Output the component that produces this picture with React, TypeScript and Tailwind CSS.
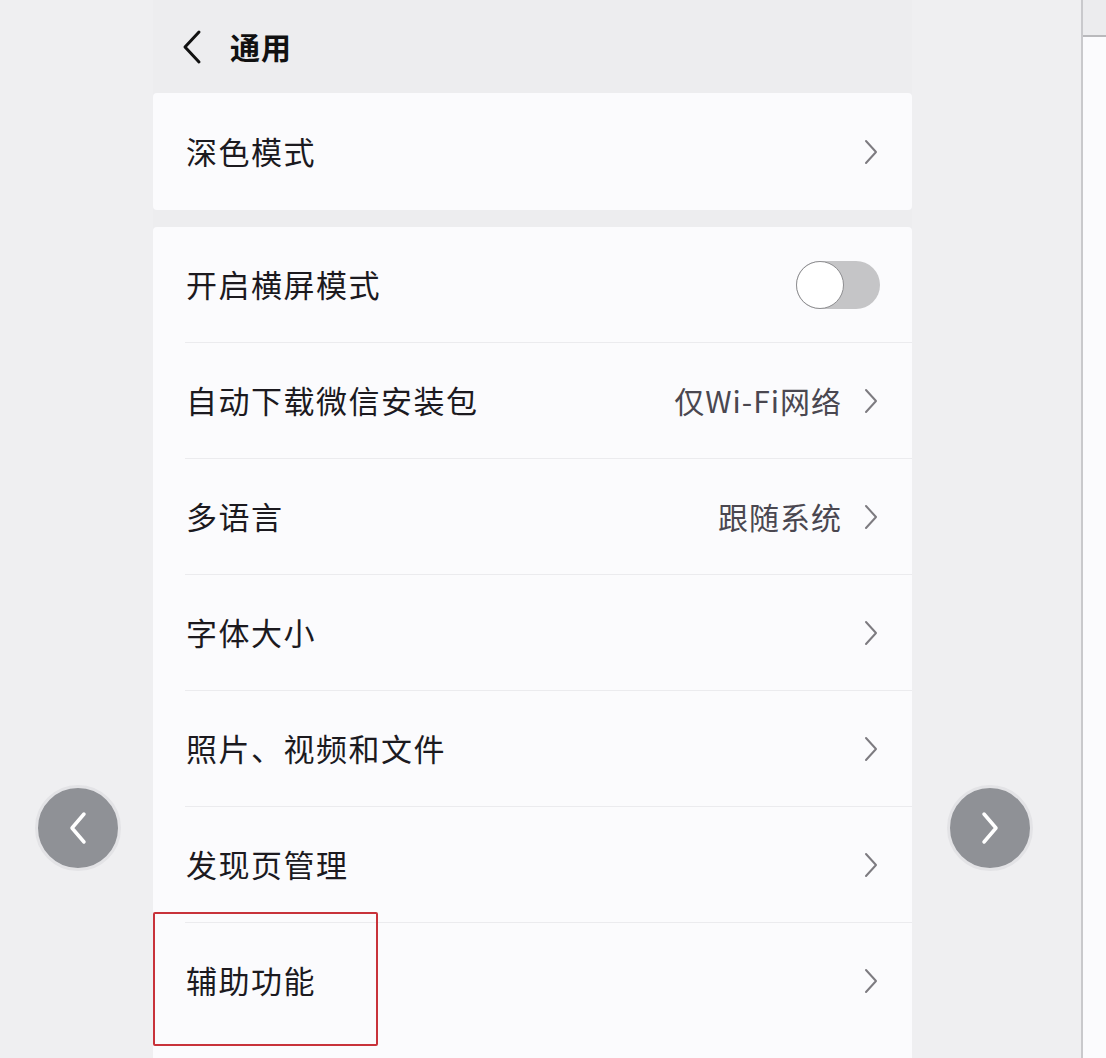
import React from "react";

const FONT = { fontFamily: '"Noto Sans CJK SC", "Noto Sans", sans-serif' };

function Chevron({ className = "" }: { className?: string }) {
  return (
    <svg width="14" height="26" viewBox="0 0 14 26" className={className}>
      <polyline points="2,2 12,13 2,24" fill="none" stroke="currentColor" strokeWidth="2" strokeLinecap="round" strokeLinejoin="round" />
    </svg>
  );
}

function Toggle() {
  return (
    <div className="relative h-[48px] w-[84px] rounded-full bg-[#c5c5c7]">
      <div className="absolute left-0 top-0 h-[48px] w-[48px] rounded-full border-[1.5px] border-[#8e8e91] bg-white" />
    </div>
  );
}

type Row = { label: string; value?: string; toggle?: boolean; boxed?: boolean };

const ROWS: Row[] = [
  { label: "开启横屏模式", toggle: true },
  { label: "自动下载微信安装包", value: "仅Wi-Fi网络" },
  { label: "多语言", value: "跟随系统" },
  { label: "字体大小" },
  { label: "照片、视频和文件" },
  { label: "发现页管理" },
  { label: "辅助功能", boxed: true },
];

function NavButton({ dir }: { dir: "left" | "right" }) {
  return (
    <div className="flex h-[86px] w-[86px] items-center justify-center rounded-full border-[3px] border-[#e3e3e6] bg-[#8f9196] text-white">
      <svg width="20" height="36" viewBox="0 0 20 36">
        <polyline
          points={dir === "left" ? "16,4 4,18 16,32" : "4,4 16,18 4,32"}
          fill="none"
          stroke="currentColor"
          strokeWidth="3.5"
          strokeLinecap="round"
          strokeLinejoin="round"
        />
      </svg>
    </div>
  );
}

export default function App() {
  return (
    <div className="relative flex h-[1058px] w-[1106px] overflow-hidden bg-[#efeff1] text-[#1c1a1f]" style={FONT}>
      <div className="w-[153px] shrink-0" />
      <div className="flex w-[759px] shrink-0 flex-col bg-[#ededef]">
        <header className="flex h-[93px] shrink-0 items-center pl-[28px]">
          <svg width="22" height="36" viewBox="0 0 22 36" className="text-[#111]">
            <polyline points="18,3 4,18 18,33" fill="none" stroke="currentColor" strokeWidth="3" strokeLinecap="round" strokeLinejoin="round" />
          </svg>
          <span className="ml-[27px] text-[30px] font-bold tracking-[1px] text-[#111]">通用</span>
        </header>

        <div className="flex h-[117px] shrink-0 items-center justify-between rounded-[4px] bg-[#fbfbfd] pl-[33px] pr-[34px]">
          <span className="text-[31px] tracking-[1.5px]">深色模式</span>
          <Chevron className="text-[#7d7b80]" />
        </div>

        <div className="mt-[17px] flex flex-1 flex-col rounded-t-[4px] bg-[#fbfbfd]">
          {ROWS.map((r, i) => (
            <div key={r.label} className="relative">
              {i > 0 && <div className="ml-[32px] h-px bg-[#ebebee]" />}
              <div className="flex h-[115px] items-center justify-between pl-[33px] pr-[34px]">
                <span className="text-[31px] tracking-[1.5px]">{r.label}</span>
                {r.toggle ? (
                  <div className="-mr-[2px]">
                    <Toggle />
                  </div>
                ) : (
                  <div className="flex items-center gap-[22px]">
                    {r.value && <span className="text-[30px] tracking-[1px] text-[#4a4750]">{r.value}</span>}
                    <Chevron className="text-[#7d7b80]" />
                  </div>
                )}
              </div>
              {r.boxed && (
                <div className="pointer-events-none absolute left-0 top-[-10px] h-[134px] w-[225px] rounded-[2px] border-2 border-[#c8323a]" />
              )}
            </div>
          ))}
        </div>
      </div>
      <div className="w-[169px] shrink-0" />
      <div className="flex w-[25px] shrink-0 flex-col border-l-2 border-[#c9c9cc] bg-[#fbfbfd]">
        <div className="h-[37px] border-b-2 border-[#b9b9bc] bg-[#ececee]" />
      </div>

      <div className="absolute left-[35px] top-[785px]">
        <NavButton dir="left" />
      </div>
      <div className="absolute left-[947px] top-[785px]">
        <NavButton dir="right" />
      </div>
    </div>
  );
}
